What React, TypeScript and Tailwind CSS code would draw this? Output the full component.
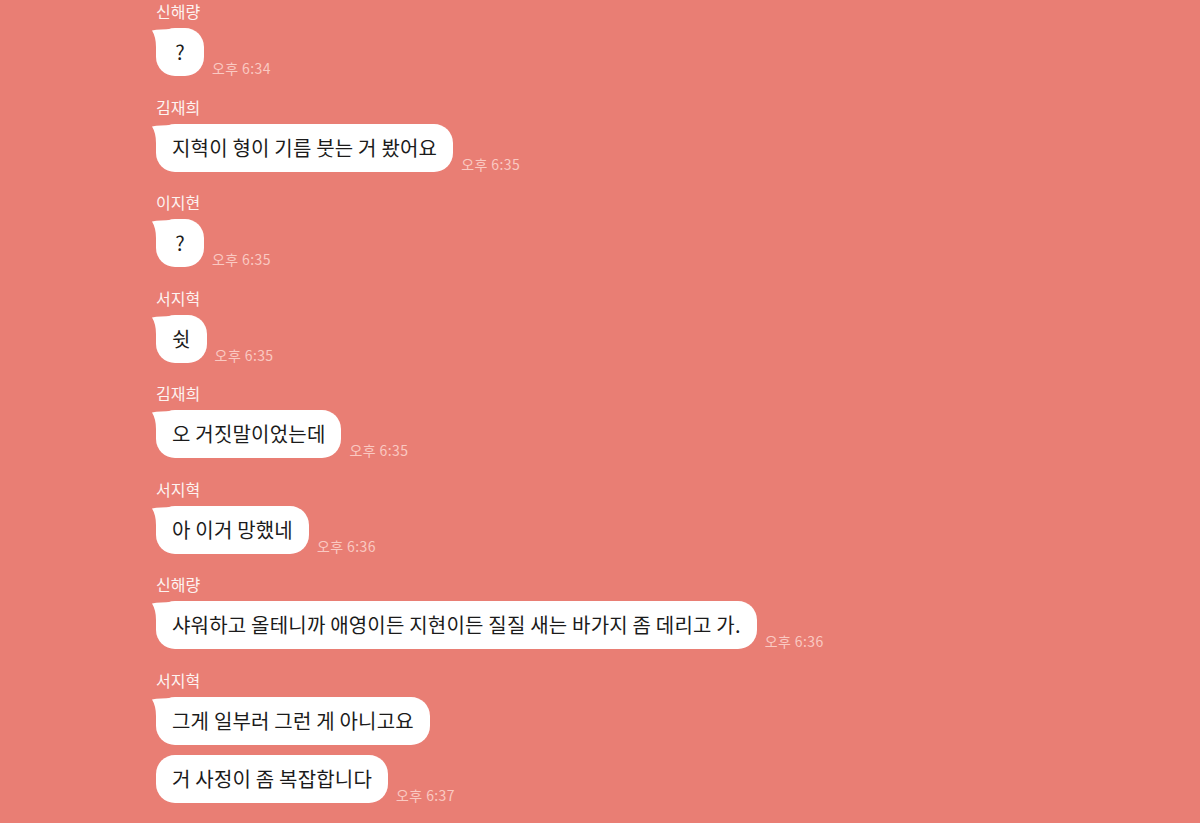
import React from 'react';

type Group = { name: string; msgs: string[]; time: string };

const groups: Group[] = [
  { name: '신해량', msgs: ['?'], time: '오후 6:34' },
  { name: '김재희', msgs: ['지혁이 형이 기름 붓는 거 봤어요'], time: '오후 6:35' },
  { name: '이지현', msgs: ['?'], time: '오후 6:35' },
  { name: '서지혁', msgs: ['쉿'], time: '오후 6:35' },
  { name: '김재희', msgs: ['오 거짓말이었는데'], time: '오후 6:35' },
  { name: '서지혁', msgs: ['아 이거 망했네'], time: '오후 6:36' },
  { name: '신해량', msgs: ['샤워하고 올테니까 애영이든 지현이든 질질 새는 바가지 좀 데리고 가.'], time: '오후 6:36' },
  { name: '서지혁', msgs: ['그게 일부러 그런 게 아니고요', '거 사정이 좀 복잡합니다'], time: '오후 6:37' },
];

function Tail() {
  return (
    <svg className="absolute left-[-4px] top-[1px]" width="20" height="24" viewBox="0 0 20 24">
      <path d="M0 1.5 Q8 0 20 0 L20 24 L4 24 L4 18 Q4 8 0 1.5 Z" fill="#ffffff" />
    </svg>
  );
}

function Bubble({ text, tail }: { text: string; tail: boolean }) {
  return (
    <div className="relative">
      {tail && <Tail />}
      <div className="relative min-w-[48px] rounded-[19px] bg-white px-4 py-[10px] text-center text-[20px] leading-[28px] tracking-[0.2px] text-[#1b1b1b]">
        {text}
      </div>
    </div>
  );
}

export default function App() {
  return (
    <div
      className="h-[823px] w-[1200px] overflow-hidden bg-[#e97e74] pl-[156px] pt-[1px]"
      style={{ fontFamily: '"Noto Sans CJK KR", "Noto Sans", sans-serif' }}
    >
      <div className="flex flex-col gap-[20.5px]">
        {groups.map((g, gi) => (
          <div key={gi} className="flex flex-col">
            <div className="h-5 text-[16px] leading-5 text-[#fdf3f1]">{g.name}</div>
            <div className="mt-[7px] flex flex-col gap-[10px]">
              {g.msgs.map((m, mi) => (
                <div key={mi} className="flex items-end gap-2">
                  <Bubble text={m} tail={mi === 0} />
                  {mi === g.msgs.length - 1 && (
                    <span className="mb-0 text-[14px] leading-4 tracking-[0.4px] text-[#fac9c2]">{g.time}</span>
                  )}
                </div>
              ))}
            </div>
          </div>
        ))}
      </div>
    </div>
  );
}
